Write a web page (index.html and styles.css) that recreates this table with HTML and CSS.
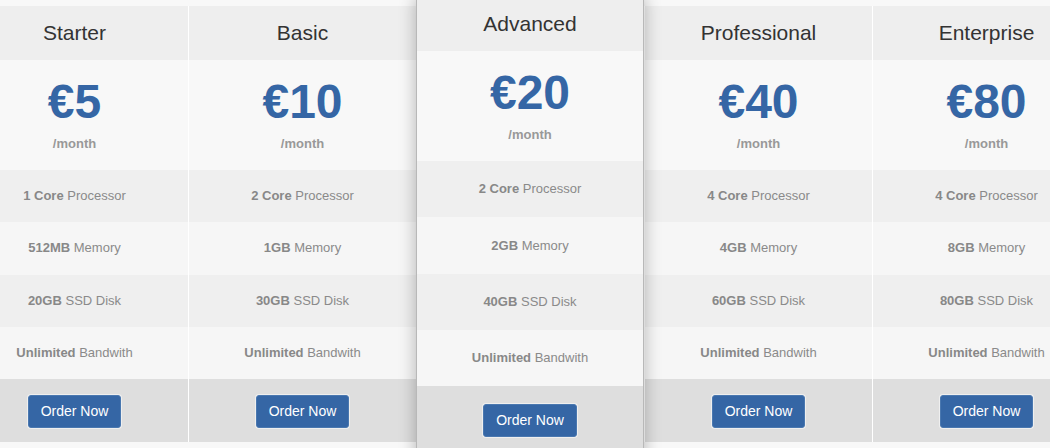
FILE: index.html
```html
<!DOCTYPE html>
<html>
<head>
<meta charset="utf-8">
<link rel="stylesheet" href="styles.css">
</head>
<body>
<div class="plans">
  <div class="plan">
    <div class="plan-head">Starter</div>
    <div class="plan-price"><div class="amount">€5</div><div class="period">/month</div></div>
    <div class="feat"><b>1 Core</b> Processor</div>
    <div class="feat"><b>512MB</b> Memory</div>
    <div class="feat"><b>20GB</b> SSD Disk</div>
    <div class="feat"><b>Unlimited</b> Bandwith</div>
    <div class="plan-foot"><button class="btn">Order Now</button></div>
  </div>
  <div class="plan">
    <div class="plan-head">Basic</div>
    <div class="plan-price"><div class="amount">€10</div><div class="period">/month</div></div>
    <div class="feat"><b>2 Core</b> Processor</div>
    <div class="feat"><b>1GB</b> Memory</div>
    <div class="feat"><b>30GB</b> SSD Disk</div>
    <div class="feat"><b>Unlimited</b> Bandwith</div>
    <div class="plan-foot"><button class="btn">Order Now</button></div>
  </div>
  <div class="plan featured">
    <div class="plan-head">Advanced</div>
    <div class="plan-price"><div class="amount">€20</div><div class="period">/month</div></div>
    <div class="feat"><b>2 Core</b> Processor</div>
    <div class="feat"><b>2GB</b> Memory</div>
    <div class="feat"><b>40GB</b> SSD Disk</div>
    <div class="feat"><b>Unlimited</b> Bandwith</div>
    <div class="plan-foot"><button class="btn">Order Now</button></div>
  </div>
  <div class="plan">
    <div class="plan-head">Professional</div>
    <div class="plan-price"><div class="amount">€40</div><div class="period">/month</div></div>
    <div class="feat"><b>4 Core</b> Processor</div>
    <div class="feat"><b>4GB</b> Memory</div>
    <div class="feat"><b>60GB</b> SSD Disk</div>
    <div class="feat"><b>Unlimited</b> Bandwith</div>
    <div class="plan-foot"><button class="btn">Order Now</button></div>
  </div>
  <div class="plan">
    <div class="plan-head">Enterprise</div>
    <div class="plan-price"><div class="amount">€80</div><div class="period">/month</div></div>
    <div class="feat"><b>4 Core</b> Processor</div>
    <div class="feat"><b>8GB</b> Memory</div>
    <div class="feat"><b>80GB</b> SSD Disk</div>
    <div class="feat"><b>Unlimited</b> Bandwith</div>
    <div class="plan-foot"><button class="btn">Order Now</button></div>
  </div>
</div>
</body>
</html>
```
FILE: styles.css
```css
html, body {
  margin: 0;
  padding: 0;
  overflow: hidden;
  background: #f8f8f8;
  font-family: "Liberation Sans", Arial, sans-serif;
}
.plans {
  display: flex;
  align-items: flex-start;
  margin-left: -40px;
  padding-top: 6px;
}
.plan {
  box-sizing: border-box;
  flex: 0 0 228px;
  width: 228px;
  border-left: 1px solid #fff;
  text-align: center;
}
.plan-head {
  height: 54px;
  line-height: 54px;
  background: #eeeeee;
  color: #333;
  font-size: 21px;
}
.plan-price {
  background: #f8f8f8;
  padding: 18px 0;
  height: 74px;
}
.amount {
  font-size: 48px;
  line-height: 48px;
  font-weight: bold;
  color: #3566a5;
}
.period {
  margin-top: 10px;
  font-size: 13px;
  line-height: 16px;
  font-weight: bold;
  color: #999;
}
.feat {
  font-size: 13px;
  line-height: 18px;
  padding: 17px 0;
  color: #8a8a8a;
  background: #efefef;
}
.feat:nth-of-type(even) {
  background: #f6f6f6;
}
.feat:nth-child(4) { padding-bottom: 18px; }
.feat b { color: #888; }
.plan-foot {
  background: #dedede;
  padding: 16px 0 14px;
}
.btn {
  font-family: "Liberation Sans", Arial, sans-serif;
  font-size: 14px;
  line-height: 19px;
  padding: 6px 12px;
  color: #fff;
  background: #3566a5;
  border: 1px solid #4a78b0;
  border-radius: 3px;
  box-shadow: 0 0 0 1px rgba(255,255,255,0.5);
}
.featured {
  position: relative;
  z-index: 1;
  margin-top: -9px;
  border-left: 1px solid #b8b8b8;
  border-right: 1px solid #b8b8b8;
  box-shadow: 0 0 16px rgba(0,0,0,0.28);
}
.featured .feat {
  padding: 19px 0;
}
.featured .feat:nth-child(4) {
  padding: 20px 0 19px;
}
.featured .plan-foot {
  padding: 18px 0 30px;
}
```
